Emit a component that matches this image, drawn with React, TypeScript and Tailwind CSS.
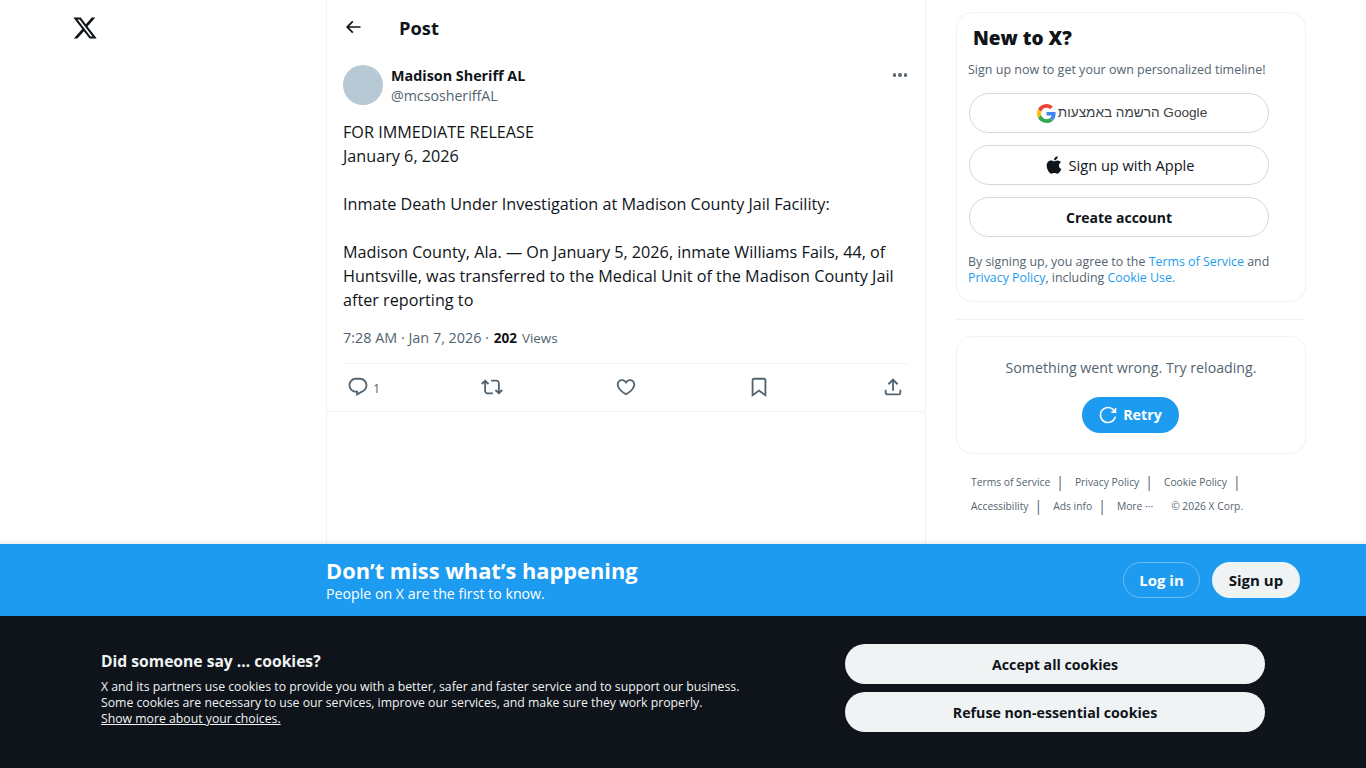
import { ReactNode } from "react";
import { FaApple } from "react-icons/fa";

const font = "font-['Open_Sans','Liberation_Sans',sans-serif]";

function Icon({ d, className }: { d: string; className: string }) {
  return (
    <svg viewBox="0 0 24 24" fill="currentColor" className={className}>
      <path d={d} />
    </svg>
  );
}

const icons = {
  x: "M18.244 2.25h3.308l-7.227 8.26 8.502 11.24H16.17l-5.214-6.817L4.99 21.75H1.68l7.73-8.835L1.254 2.25H8.08l4.713 6.231zm-1.161 17.52h1.833L7.084 4.126H5.117z",
  back: "M7.414 13l5.043 5.04-1.414 1.42L3.586 12l7.457-7.46 1.414 1.42L7.414 11H21v2H7.414z",
  reply:
    "M1.751 10c0-4.42 3.584-8 8.005-8h4.366c4.49 0 8.129 3.64 8.129 8.13 0 2.96-1.607 5.68-4.196 7.11l-8.054 4.46v-3.69h-.067c-4.49.1-8.183-3.51-8.183-8.01zm8.005-6c-3.317 0-6.005 2.69-6.005 6 0 3.37 2.77 6.08 6.138 6.01l.351-.01h1.761v2.3l5.087-2.81c1.951-1.08 3.163-3.13 3.163-5.36 0-3.39-2.744-6.13-6.129-6.13H9.756z",
  retweet:
    "M4.5 3.88l4.432 4.14-1.364 1.46L5.5 7.55V16c0 1.1.896 2 2 2H13v2H7.5c-2.209 0-4-1.79-4-4V7.55L1.432 9.48.068 8.02 4.5 3.88zM16.5 6H11V4h5.5c2.209 0 4 1.79 4 4v8.45l2.068-1.93 1.364 1.46-4.432 4.14-4.432-4.14 1.364-1.46 2.068 1.93V8c0-1.1-.896-2-2-2z",
  like: "M16.697 5.5c-1.222-.06-2.679.51-3.89 2.16l-.805 1.09-.806-1.09C9.984 6.01 8.526 5.44 7.304 5.5c-1.243.07-2.349.78-2.91 1.91-.552 1.12-.633 2.78.479 4.82 1.074 1.97 3.257 4.27 7.129 6.61 3.87-2.34 6.052-4.64 7.126-6.61 1.111-2.04 1.03-3.7.477-4.82-.561-1.13-1.666-1.84-2.908-1.91zm4.187 7.69c-1.351 2.48-4.001 5.12-8.379 7.67l-.503.3-.504-.3c-4.379-2.55-7.029-5.19-8.382-7.67-1.36-2.5-1.41-4.86-.514-6.67.887-1.79 2.647-2.91 4.601-3.01 1.651-.09 3.368.56 4.798 2.01 1.429-1.45 3.146-2.1 4.796-2.01 1.954.1 3.714 1.22 4.601 3.01.896 1.81.846 4.17-.514 6.67z",
  bookmark:
    "M4 4.5C4 3.12 5.119 2 6.5 2h11C18.881 2 20 3.12 20 4.5v18.44l-8-5.71-8 5.71V4.5zM6.5 4c-.276 0-.5.22-.5.5v14.56l6-4.29 6 4.29V4.5c0-.28-.224-.5-.5-.5h-11z",
  share:
    "M12 2.59l5.7 5.7-1.41 1.42L13 6.41V16h-2V6.41l-3.3 3.3-1.41-1.42L12 2.59zM21 15l-.02 3.51c0 1.38-1.12 2.49-2.5 2.49H5.5C4.11 21 3 19.88 3 18.5V15h2v3.5c0 .28.22.5.5.5h12.98c.28 0 .5-.22.5-.5L19 15h2z",
  retry:
    "M12 4c-4.418 0-8 3.58-8 8s3.582 8 8 8c3.806 0 6.993-2.66 7.802-6.22l1.95.44C20.742 18.67 16.76 22 12 22 6.477 22 2 17.52 2 12S6.477 2 12 2c3.272 0 6.176 1.57 8 4V3.5h2v6h-6v-2h2.616C17.175 5.39 14.749 4 12 4z",
};

function GoogleG() {
  return (
    <svg viewBox="0 0 48 48" className="w-[19px] h-[19px] shrink-0">
      <path fill="#EA4335" d="M24 9.5c3.54 0 6.71 1.22 9.21 3.6l6.85-6.85C35.9 2.38 30.47 0 24 0 14.62 0 6.51 5.38 2.56 13.22l7.98 6.19C12.43 13.72 17.74 9.5 24 9.5z" />
      <path fill="#4285F4" d="M46.98 24.55c0-1.57-.15-3.09-.38-4.55H24v9.02h12.94c-.58 2.96-2.26 5.48-4.78 7.18l7.73 6c4.51-4.18 7.09-10.36 7.09-17.65z" />
      <path fill="#FBBC05" d="M10.53 28.59c-.48-1.45-.76-2.99-.76-4.59s.27-3.14.76-4.59l-7.98-6.19C.92 16.46 0 20.12 0 24c0 3.88.92 7.54 2.56 10.78l7.97-6.19z" />
      <path fill="#34A853" d="M24 48c6.48 0 11.93-2.13 15.89-5.81l-7.73-6c-2.15 1.45-4.92 2.3-8.16 2.3-6.26 0-11.57-4.22-13.47-9.91l-7.98 6.19C6.51 42.62 14.62 48 24 48z" />
    </svg>
  );
}

function Pill({ children, className }: { children: ReactNode; className?: string }) {
  return (
    <div
      className={`flex items-center justify-center h-10 w-[300px] ml-[13px] rounded-full border border-[#cfd9de] text-[#0f1419] ${className ?? ""}`}
    >
      {children}
    </div>
  );
}

function Action({ d, count }: { d: string; count?: string }) {
  return (
    <div className="flex items-center w-[32px] text-[#536471]">
      <Icon d={d} className="w-[22px] h-[22px] shrink-0" />
      {count && <span className="ml-[4px] text-[12.5px] leading-4 mt-[4px]">{count}</span>}
    </div>
  );
}

function Sep() {
  return <span className="ml-[6px] mr-[11px] text-[14px] text-[#536471]">|</span>;
}

export default function App() {
  return (
    <div className={`flex flex-col h-screen overflow-hidden bg-white text-[#0f1419] ${font}`}>
      <div className="flex flex-1 min-h-0">
        <div className="w-[326px] shrink-0 pl-[72px] pt-[15px]">
          <Icon d={icons.x} className="w-[26px] h-[26px] text-[#0f1419]" />
        </div>

        <main className="w-[600px] shrink-0 border-x border-[#eff3f4]">
          <header className="flex items-center h-[56px] pl-4">
            <Icon d={icons.back} className="w-5 h-5 -mt-[2px]" />
            <h1 className="ml-[36px] text-[18.3px] font-bold">Post</h1>
          </header>

          <div className="px-4">
            <div className="flex items-start pt-[9px]">
              <div className="w-10 h-10 rounded-full bg-[#b6c9d4]" />
              <div className="ml-2 flex-1 pt-px -mb-px">
                <div className="text-[14.35px] leading-5 font-bold">Madison Sheriff AL</div>
                <div className="text-[14.2px] leading-5 text-[#536471]">@mcsosheriffAL</div>
              </div>
              <div className="flex gap-[2px] pt-[8px] pr-[2px]">
                <span className="w-[3.5px] h-[3.5px] rounded-full bg-[#536471]" />
                <span className="w-[3.5px] h-[3.5px] rounded-full bg-[#536471]" />
                <span className="w-[3.5px] h-[3.5px] rounded-full bg-[#536471]" />
              </div>
            </div>

            <p className="mt-[15px] text-[16.2px] leading-6 whitespace-pre-line">
              {`FOR IMMEDIATE RELEASE
January 6, 2026

Inmate Death Under Investigation at Madison County Jail Facility:

Madison County, Ala. — On January 5, 2026, inmate Williams Fails, 44, of
Huntsville, was transferred to the Medical Unit of the Madison County Jail
after reporting to`}
            </p>

            <div className="mt-[15px] h-[37px] flex items-center text-[14.4px] text-[#536471] border-b border-[#eff3f4] pb-[14px]">
              7:28 AM · Jan 7, 2026 ·&nbsp;
              <span className="ml-px font-bold text-[#0f1419] text-[13.5px]">202</span>
              <span className="ml-[5px] text-[13.4px]">Views</span>
            </div>
          </div>

          <div className="flex items-center justify-between h-[48px] pl-[20px] pr-[21px] pb-[2px] border-b border-[#eff3f4]">
            <Action d={icons.reply} count="1" />
            <Action d={icons.retweet} />
            <Action d={icons.like} />
            <Action d={icons.bookmark} />
            <Icon d={icons.share} className="w-[22px] h-[22px] text-[#536471]" />
          </div>
        </main>

        <aside className="w-[350px] ml-[30px] shrink-0 pt-3">
          <section className="h-[290px] rounded-2xl border border-[#eff3f4] pl-[11px] pt-[13px]">
            <h2 className="ml-[5px] text-[19px] leading-6 font-extrabold">New to X?</h2>
            <p className="mt-[12px] text-[12.5px] leading-4 text-[#536471]">
              Sign up now to get your own personalized timeline!
            </p>
            <div className="-ml-[12px] mt-[15px] flex flex-col gap-3">
              <Pill className="gap-[2px] pl-[6px]">
                <GoogleG />
                <span className="pt-px font-['Liberation_Sans',sans-serif] text-[13.6px] text-[#3c4043]">הרשמה באמצעות Google</span>
              </Pill>
              <Pill className="gap-[5px]">
                <FaApple className="w-[20px] h-[20px]" />
                <span className="pt-px text-[14.6px]">Sign up with Apple</span>
              </Pill>
              <Pill className="text-[14px] font-bold">Create account</Pill>
            </div>
            <p className="mt-[17px] text-[12.4px] leading-4 text-[#536471]">
              By signing up, you agree to the <span className="text-[#1d9bf0]">Terms of Service</span> and
              <br />
              <span className="text-[#1d9bf0]">Privacy Policy</span>, including <span className="text-[#1d9bf0]">Cookie Use.</span>
            </p>
          </section>

          <div className="mt-[17px] border-t border-[#eff3f4]" />

          <section className="mt-4 h-[118px] rounded-2xl border border-[#eff3f4] flex flex-col items-center pt-[21px]">
            <p className="text-[14.2px] leading-5 text-[#536471]">Something went wrong. Try reloading.</p>
            <div className="-ml-[2px] mt-[19px] flex items-center justify-center gap-[5px] w-[97px] h-9 rounded-full bg-[#1d9bf0] text-white text-[14.3px] font-bold">
              <Icon d={icons.retry} className="w-5 h-5" />
              Retry
            </div>
          </section>

          <footer className="mt-[16px] pl-[15px] text-[10.3px] text-[#536471] leading-6">
            <div className="flex items-center">
              Terms of Service
              <Sep />
              Privacy Policy
              <Sep />
              Cookie Policy
              <Sep />
            </div>
            <div className="flex items-center">
              Accessibility
              <Sep />
              Ads info
              <Sep />
              More ···
              <span className="ml-[18px]">© 2026 X Corp.</span>
            </div>
          </footer>
        </aside>
      </div>

      <div className="relative h-[72px] shrink-0 bg-[#1d9bf0] flex items-center text-white shadow-[0_-2px_4px_rgba(0,0,0,0.08)]">
        <div className="ml-[326px] w-[600px] pt-px">
          <div className="text-[21.8px] leading-[26px] font-bold">Don’t miss what’s happening</div>
          <div className="text-[14.2px] leading-[18px] pt-px">People on X are the first to know.</div>
        </div>
        <div className="ml-auto mr-[66px] flex gap-3">
          <div className="flex items-center justify-center w-[77px] h-9 rounded-full border border-[#6bbdf5] text-[15px] font-bold">
            Log in
          </div>
          <div className="flex items-center justify-center w-[88px] h-9 rounded-full bg-[#eff3f4] text-[#0f1419] text-[15px] font-bold">
            Sign up
          </div>
        </div>
      </div>

      <div className="h-[152px] shrink-0 bg-[#0f141a] flex text-[#eff3f4]">
        <div className="ml-[101px] w-[744px] pt-[33px]">
          <h3 className="text-[15.65px] leading-6 font-bold">Did someone say … cookies?</h3>
          <p className="mt-[6px] text-[12.25px] leading-4">
            X and its partners use cookies to provide you with a better, safer and faster service and to support our business.
            <br />
            Some cookies are necessary to use our services, improve our services, and make sure they work properly.
            <br />
            <span className="underline">Show more about your choices.</span>
          </p>
        </div>
        <div className="pt-7 flex flex-col gap-2">
          <div className="flex items-center justify-center pt-px w-[420px] h-10 rounded-full bg-[#eff3f4] text-[#0f1419] text-[14.2px] font-bold">
            Accept all cookies
          </div>
          <div className="flex items-center justify-center pt-px w-[420px] h-10 rounded-full bg-[#eff3f4] text-[#0f1419] text-[14.2px] font-bold">
            Refuse non-essential cookies
          </div>
        </div>
      </div>
    </div>
  );
}
